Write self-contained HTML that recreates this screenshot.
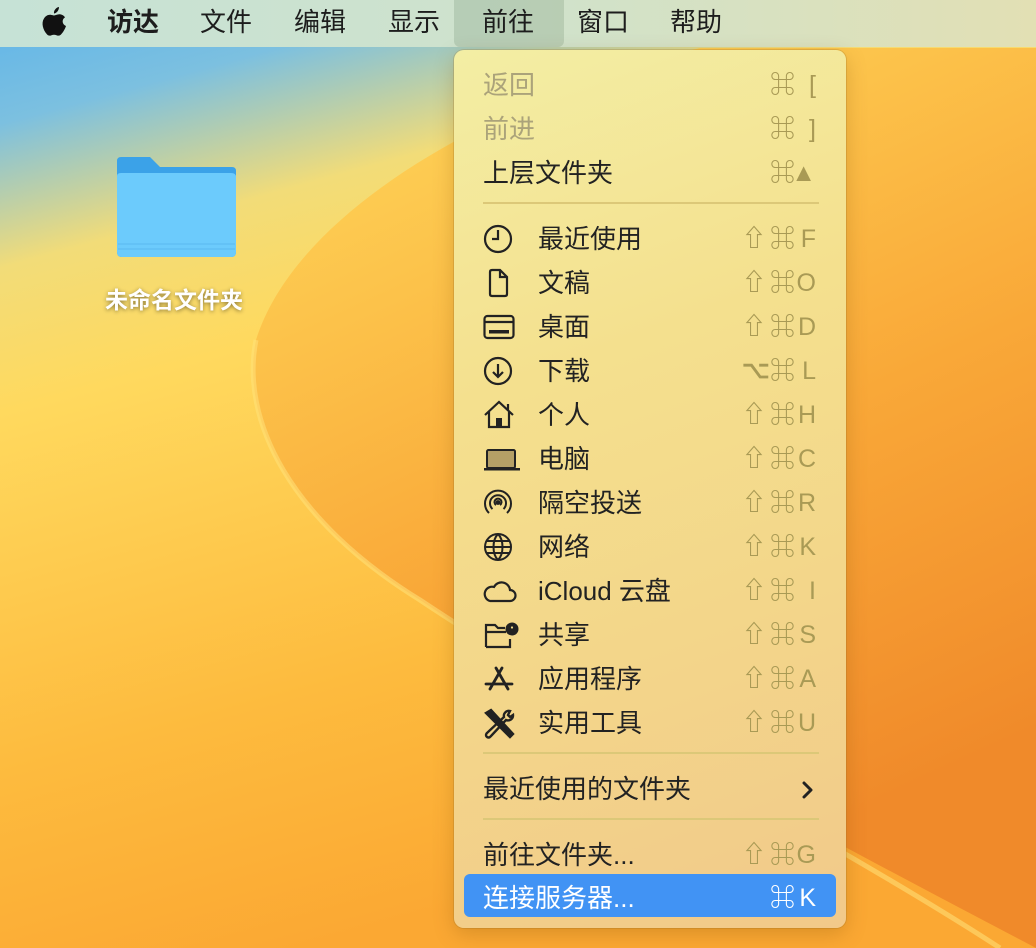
<!DOCTYPE html>
<html><head><meta charset="utf-8"><style>
*{margin:0;padding:0;box-sizing:border-box}
body{width:1036px;height:948px;overflow:hidden;position:relative;font-family:"Liberation Sans","PingFang SC","Noto Sans CJK SC",sans-serif;}
#bg{position:absolute;left:0;top:0}
.mb{position:absolute;left:0;top:0;width:1036px;height:47px;background:linear-gradient(90deg,#c6e2d6 0%,#cfe2cc 50%,#e2e0b4 100%);}
.mb span{position:absolute;top:5px;font-size:26px;color:#1d1d1d;line-height:34px}
.mb .sel{position:absolute;left:454px;top:0;width:110px;height:47px;background:rgba(100,130,100,.22);border-radius:0 0 6px 6px}
.menu{position:absolute;left:454px;top:50px;width:392px;height:878px;border-radius:10px;background:linear-gradient(160deg,#f3eea4 0%,#f4e08e 35%,#f3d68a 65%,#f2c98a 100%);box-shadow:0 6px 20px rgba(120,70,0,.25),0 0 0 1px rgba(160,120,40,.25);}
.it{position:absolute;left:29px;width:334px;height:40px;font-size:26px;line-height:40px;color:#222}
.it .t{position:absolute;left:0}
.it.ic .t{left:55px}
.it .s,.it .c,.it .l{position:absolute;color:#a99a55;font-size:25px}
.it .s{left:259px;font-size:24px;font-weight:bold}
.it .c{left:287px;font-weight:bold}
.it .l{right:1px}
.dis{color:#aba37a !important}
.sep{position:absolute;left:29px;width:336px;height:2px;background:#dcc878}
.hl{position:absolute;left:10px;top:824px;width:372px;height:43px;background:#4193f4;border-radius:6px}
svg.i{position:absolute;left:0;top:5px}
</style></head><body>
<svg id="bg" width="1036" height="948">
<defs>
<linearGradient id="g1" x1="0" y1="0" x2="0.3" y2="1">
<stop offset="0" stop-color="#5db4ea"/><stop offset="0.12" stop-color="#7cc0e0"/><stop offset="0.26" stop-color="#f2dc78"/><stop offset="0.4" stop-color="#ffd95e"/><stop offset="0.75" stop-color="#fdbb3e"/><stop offset="1" stop-color="#fba833"/></linearGradient>
<linearGradient id="g2" x1="0" y1="0" x2="0.4" y2="1">
<stop offset="0" stop-color="#ffda5e"/><stop offset="0.3" stop-color="#fcc24a"/><stop offset="0.6" stop-color="#f9a838"/><stop offset="1" stop-color="#f08a2a"/></linearGradient>
</defs>
<rect width="1036" height="948" fill="url(#g1)"/>
<path d="M700,48 C520,90 300,200 256,340 C240,420 290,520 420,600 C600,720 850,850 1036,948 L1036,48 Z" fill="url(#g2)"/>
<path d="M256,340 C240,420 290,520 420,600 C600,720 850,850 1000,948" fill="none" stroke="#ffe27a" stroke-width="5" opacity="0.55"/>
<path d="M118,157 L150,157 L160,167 L232,167 Q236,167 236,171 L236,252 Q236,257 231,257 L122,257 Q117,257 117,252 L117,161 Q117,157 121,157 Z" fill="#3ba2e8"/>
<path d="M117,176 Q117,173 121,173 L231,173 Q236,173 236,177 L236,252 Q236,257 231,257 L122,257 Q117,257 117,252 Z" fill="#6ccbfc"/>
<line x1="118" y1="244" x2="235" y2="244" stroke="#5ab8f0" stroke-width="1"/>
<line x1="118" y1="249" x2="235" y2="249" stroke="#5ab8f0" stroke-width="1"/>
<text x="174" y="308" text-anchor="middle" font-size="23" font-weight="bold" fill="#fff" style="font-family:'Liberation Sans','Noto Sans CJK SC',sans-serif;filter:drop-shadow(0 1px 2px rgba(0,0,0,.45))">未命名文件夹</text>
</svg>
<div class="mb">
<div class="sel"></div>
<svg style="position:absolute;left:40px;top:6px" width="28" height="32" viewBox="0 0 28 32"><path d="M19,1 C19,4 17,7 14,7.5 C13.6,4.5 16,1.5 19,1 Z M14,9.5 C15.5,9.5 17.5,8 20,8.3 C22,8.5 24,9.6 25,11.4 C21.5,13.5 22,18.5 26,20 C25,23 23,26.5 21,28.5 C19.5,30 18,29.8 16.5,29.2 C15,28.6 13,28.6 11.5,29.2 C10,29.8 8.5,30 7,28.4 C3,24 1,17 4,12.5 C5.5,10 8,8.6 10.5,8.8 C12,9 13,9.5 14,9.5 Z" fill="#111"/></svg>
<span style="left:107px;font-weight:bold">访达</span>
<span style="left:200px">文件</span>
<span style="left:294px">编辑</span>
<span style="left:388px">显示</span>
<span style="left:482px">前往</span>
<span style="left:577px">窗口</span>
<span style="left:670px">帮助</span>
</div>
<div class="menu">
<div class="hl"></div>
<div class="it" style="top:15px"><span class="t dis">返回</span><span class="c">⌘</span><span class="l">[</span></div>
<div class="it" style="top:59px"><span class="t dis">前进</span><span class="c">⌘</span><span class="l">]</span></div>
<div class="it" style="top:103px"><span class="t">上层文件夹</span><span class="c">⌘</span><span class="l">▲</span></div>
<div class="sep" style="top:152px"></div>

<div class="it ic" style="top:169px"><svg class="i" width="30" height="30" viewBox="0 0 30 30" fill="none" stroke="#222" stroke-width="2.2"><circle cx="15" cy="15" r="13"/><path d="M15 6v9h-6"/></svg><span class="t">最近使用</span><span class="s">⇧</span><span class="c">⌘</span><span class="l">F</span></div>
<div class="it ic" style="top:213px"><svg class="i" width="30" height="30" viewBox="0 0 30 30" fill="none" stroke="#222" stroke-width="2.2"><path d="M9 2h8l7 7v17q0 2-2 2H9q-2 0-2-2V4q0-2 2-2zM17 2v7h7"/></svg><span class="t">文稿</span><span class="s">⇧</span><span class="c">⌘</span><span class="l">O</span></div>
<div class="it ic" style="top:257px"><svg class="i" width="32" height="30" viewBox="0 0 32 30" fill="none" stroke="#222" stroke-width="2.2"><rect x="1.5" y="4" width="29" height="22" rx="3"/><path d="M1.5 10h29"/><rect x="6" y="18" width="20" height="3.5" fill="#222" stroke="none"/></svg><span class="t">桌面</span><span class="s">⇧</span><span class="c">⌘</span><span class="l">D</span></div>
<div class="it ic" style="top:301px"><svg class="i" width="30" height="30" viewBox="0 0 30 30" fill="none" stroke="#222" stroke-width="2.2"><circle cx="15" cy="15" r="13"/><path d="M15 8v13M10 16l5 5 5-5"/></svg><span class="t">下载</span><span class="s">⌥</span><span class="c">⌘</span><span class="l">L</span></div>
<div class="it ic" style="top:345px"><svg class="i" width="32" height="30" viewBox="0 0 32 30" fill="none" stroke="#222" stroke-width="2.2"><path d="M2 15L16 2l14 13M6 12v15h20V12M25 4v7"/><rect x="13" y="18" width="6" height="9" fill="#222" stroke="none"/></svg><span class="t">个人</span><span class="s">⇧</span><span class="c">⌘</span><span class="l">H</span></div>
<div class="it ic" style="top:389px"><svg class="i" width="38" height="30" viewBox="0 0 38 30"><rect x="4" y="6" width="28" height="18" rx="1.5" fill="#b5a066" stroke="#222" stroke-width="2"/><rect x="1" y="24" width="36" height="2.5" fill="#222"/></svg><span class="t">电脑</span><span class="s">⇧</span><span class="c">⌘</span><span class="l">C</span></div>
<div class="it ic" style="top:433px"><svg class="i" width="30" height="30" viewBox="0 0 30 30" fill="none" stroke="#222" stroke-width="2"><path d="M6 25a13 13 0 1 1 18 0M9.5 21a8 8 0 1 1 11 0M13 17a3.5 3.5 0 1 1 4 0"/><circle cx="15" cy="14.5" r="1.4" fill="#222"/></svg><span class="t">隔空投送</span><span class="s">⇧</span><span class="c">⌘</span><span class="l">R</span></div>
<div class="it ic" style="top:477px"><svg class="i" width="30" height="30" viewBox="0 0 30 30" fill="none" stroke="#222" stroke-width="2"><circle cx="15" cy="15" r="13"/><path d="M2 15h26M15 2c-6 6-6 20 0 26M15 2c6 6 6 20 0 26M4 9h22M4 21h22"/></svg><span class="t">网络</span><span class="s">⇧</span><span class="c">⌘</span><span class="l">K</span></div>
<div class="it ic" style="top:521px"><svg class="i" width="34" height="30" viewBox="0 0 34 30" fill="none" stroke="#222" stroke-width="2.2"><path d="M7 25h20a5.5 5.5 0 0 0 0-11 8.5 8.5 0 0 0-16-3 6.5 6.5 0 0 0-4 14z"/></svg><span class="t">iCloud 云盘</span><span class="s">⇧</span><span class="c">⌘</span><span class="l">I</span></div>
<div class="it ic" style="top:565px"><svg class="i" width="36" height="30" viewBox="0 0 36 30" fill="none" stroke="#222" stroke-width="2.2"><path d="M23 12H3M3 27V5h9l3 3h7M3 27h24v-8"/><circle cx="29" cy="9" r="6.5" fill="#222" stroke="none"/><circle cx="29" cy="7.5" r="2.2" fill="#f3dc8c"/></svg><span class="t">共享</span><span class="s">⇧</span><span class="c">⌘</span><span class="l">S</span></div>
<div class="it ic" style="top:609px"><svg class="i" width="32" height="30" viewBox="0 0 32 30" fill="none" stroke="#222" stroke-width="2.8" stroke-linecap="round"><path d="M13 4l12 21M19 4L7 25M3 20h26"/></svg><span class="t">应用程序</span><span class="s">⇧</span><span class="c">⌘</span><span class="l">A</span></div>
<div class="it ic" style="top:653px"><svg class="i" width="32" height="32" viewBox="0 0 32 32" fill="none" stroke="#222" stroke-width="2.4"><path d="M3 5l5-3 22 24-3 3z" fill="#222"/><path d="M27 3a5 5 0 0 0-6 6L4 25a2.5 2.5 0 1 0 3.5 3.5L23 12a5 5 0 0 0 7-5l-3 2-2-2z"/></svg><span class="t">实用工具</span><span class="s">⇧</span><span class="c">⌘</span><span class="l">U</span></div>
<div class="sep" style="top:702px"></div>
<div class="it" style="top:719px"><span class="t">最近使用的文件夹</span><svg style="position:absolute;right:3px;top:12px" width="12" height="18" viewBox="0 0 12 18" fill="none" stroke="#222" stroke-width="3" stroke-linecap="round" stroke-linejoin="round"><path d="M2 2l7 7-7 7"/></svg></div>
<div class="sep" style="top:768px"></div>
<div class="it" style="top:785px"><span class="t">前往文件夹...</span><span class="s">⇧</span><span class="c">⌘</span><span class="l">G</span></div>
<div class="it" style="top:828px;color:#fff"><span class="t">连接服务器...</span><span class="c" style="color:#fff">⌘</span><span class="l" style="color:#fff">K</span></div>
</div>
</body></html>
